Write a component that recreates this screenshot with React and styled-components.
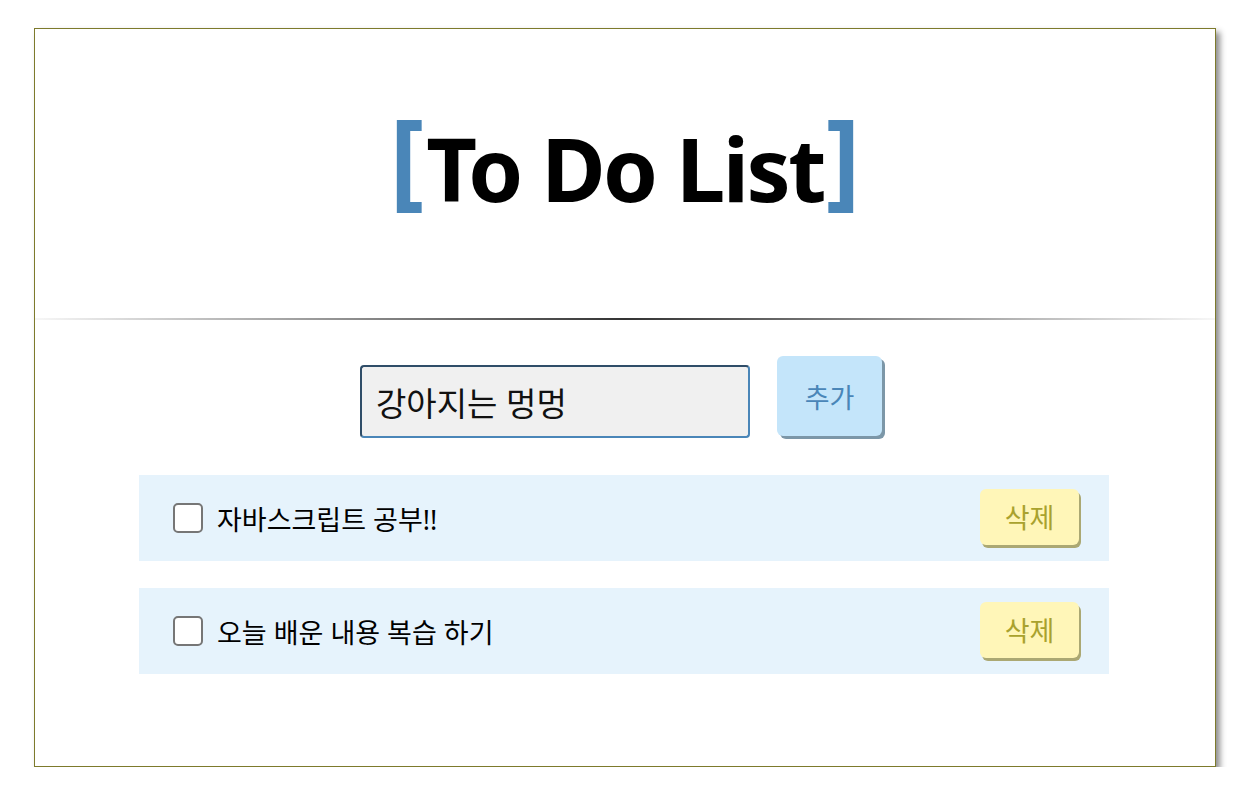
import React, { useState } from 'react';
import styled, { createGlobalStyle } from 'styled-components';

const GlobalStyle = createGlobalStyle`
  body {
    margin: 8px;
    background: #fff;
    font-family: "Noto Sans", "Noto Sans CJK KR", sans-serif;
  }
`;

const initialTodos = [
  { id: 1, text: '자바스크립트 공부!!', done: false },
  { id: 2, text: '오늘 배운 내용 복습 하기', done: false },
];

export default function App() {
  const [todos, setTodos] = useState(initialTodos);
  const [text, setText] = useState('강아지는 멍멍');

  const addTodo = () => {
    if (!text.trim()) return;
    setTodos([...todos, { id: Date.now(), text, done: false }]);
    setText('');
  };

  const toggle = (id) => {
    setTodos(todos.map(t => t.id === id ? { ...t, done: !t.done } : t));
  };

  const remove = (id) => {
    setTodos(todos.filter(t => t.id !== id));
  };

  return (
    <>
      <GlobalStyle />
      <StCont>
        <StHeader>
          <StTitle>
            <StBracket>[</StBracket>To Do List<StBracket>]</StBracket>
          </StTitle>
        </StHeader>
        <StDivider />

        <StForm>
          <StInput value={text} onChange={e => setText(e.target.value)} />
          <StAddBtn onClick={addTodo}>추가</StAddBtn>
        </StForm>

        <StList>
          {todos.map(item => (
            <StItem key={item.id}>
              <StCheck type="checkbox" checked={item.done} onChange={() => toggle(item.id)} />
              <StText done={item.done}>{item.text}</StText>
              <StDelBtn onClick={() => remove(item.id)}>삭제</StDelBtn>
            </StItem>
          ))}
        </StList>
      </StCont>
    </>
  );
}

const StCont = styled.div`
  width: 1180px;
  margin: 20px 0 0 26px;
  padding-bottom: 92px;
  border: 1px solid #7d7a2c;
  box-shadow: 4px 4px 6px rgba(0, 0, 0, 0.45);
  background: #fff;
`;

const StHeader = styled.div`
  height: 289px;
  display: flex;
  justify-content: center;
  align-items: flex-start;
`;

const StTitle = styled.h1`
  margin: 72px 0 0;
  font-size: 88px;
  font-weight: 700;
  color: #000;
  line-height: 110px;
  letter-spacing: -2.5px;
`;

const StBracket = styled.span`
  color: #4a86b8;
  font-size: 105px;
  font-weight: 700;
  vertical-align: 6px;
  letter-spacing: 0;
  margin: 0 2px;
`;

const StDivider = styled.hr`
  margin: 0;
  height: 2px;
  border: none;
  background: linear-gradient(to right, rgba(0,0,0,0.03), #333, rgba(0,0,0,0.03));
`;

const StForm = styled.div`
  display: flex;
  justify-content: center;
  align-items: flex-end;
  gap: 27px;
  margin-top: 36px;
  padding-right: 8px;
`;

const StInput = styled.input`
  width: 390px;
  height: 73px;
  box-sizing: border-box;
  padding: 0 14px;
  font-family: "Noto Sans", "Noto Sans CJK KR", sans-serif;
  font-size: 33px;
  color: #111;
  background: #f0f0f0;
  border: 2px solid;
  border-color: #2f4d68 #4a86b8 #4a86b8 #2f4d68;
  border-radius: 4px;
  outline: none;
`;

const StAddBtn = styled.button`
  width: 105px;
  height: 80px;
  margin-bottom: 2px;
  font-family: "Noto Sans", "Noto Sans CJK KR", sans-serif;
  font-size: 27px;
  color: #4a86b8;
  background: #c4e5fa;
  border: none;
  border-radius: 6px;
  box-shadow: 3px 3px 0 #7c97a8;
  cursor: pointer;
`;

const StList = styled.ul`
  list-style: none;
  margin: 37px 0 0 104px;
  padding: 0;
  width: 970px;
  display: flex;
  flex-direction: column;
  gap: 27px;
`;

const StItem = styled.li`
  display: flex;
  align-items: center;
  height: 86px;
  padding: 0 30px 0 34px;
  background: #e6f3fc;
`;

const StCheck = styled.input`
  appearance: none;
  flex: 0 0 30px;
  width: 30px;
  height: 30px;
  margin: 0 14px 0 0;
  border: 2px solid #767676;
  border-radius: 5px;
  background: #fff;
  box-sizing: border-box;
  cursor: pointer;
  &:checked {
    background: #4a86b8;
    border-color: #4a86b8;
  }
`;

const StText = styled.span`
  flex: 1;
  font-size: 27px;
  color: #000;
  text-decoration: ${props => props.done ? 'line-through' : 'none'};
`;

const StDelBtn = styled.button`
  width: 99px;
  height: 56px;
  margin-bottom: 3px;
  font-family: "Noto Sans", "Noto Sans CJK KR", sans-serif;
  font-size: 27px;
  color: #a9a22e;
  background: #fff6b8;
  border: none;
  border-radius: 6px;
  box-shadow: 2px 3px 0 #aba873;
  cursor: pointer;
`;
